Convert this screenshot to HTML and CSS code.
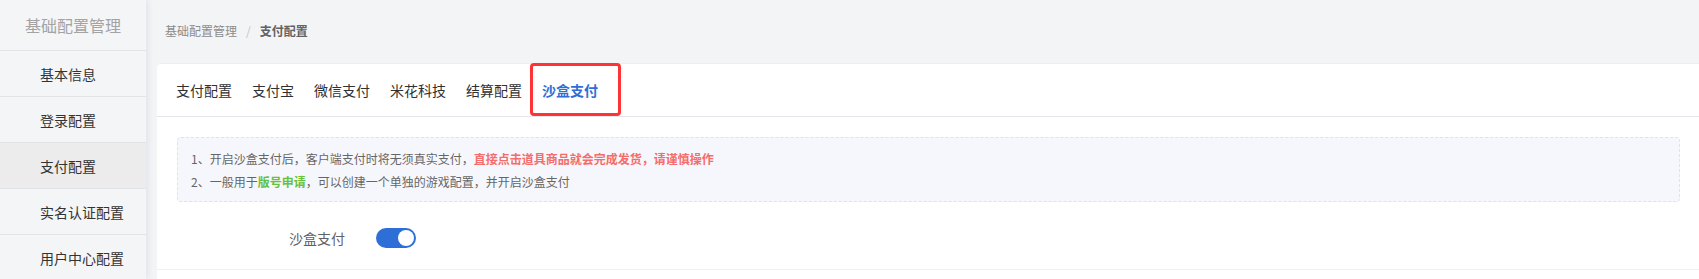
FILE: index.html
```html
<!DOCTYPE html>
<html lang="zh-CN">
<head>
<meta charset="utf-8">
<title>支付配置</title>
<link rel="stylesheet" href="styles.css">
</head>
<body>
<div class="layout">
  <aside class="sidebar">
    <div class="side-title">基础配置管理</div>
    <div class="side-item">基本信息</div>
    <div class="side-item">登录配置</div>
    <div class="side-item active">支付配置</div>
    <div class="side-item">实名认证配置</div>
    <div class="side-item">用户中心配置</div>
  </aside>
  <main class="main">
    <div class="breadcrumb">
      <span class="crumb">基础配置管理</span>
      <span class="sep">/</span>
      <span class="crumb current">支付配置</span>
    </div>
    <section class="card">
      <nav class="tabs">
        <div class="tab">支付配置</div>
        <div class="tab">支付宝</div>
        <div class="tab">微信支付</div>
        <div class="tab">米花科技</div>
        <div class="tab">结算配置</div>
        <div class="tab active">沙盒支付<span class="highlight"></span></div>
      </nav>
      <div class="card-body">
        <div class="notice">
          <p>1、开启沙盒支付后，客户端支付时将无须真实支付，<b class="red">直接点击道具商品就会完成发货，请谨慎操作</b></p>
          <p>2、一般用于<b class="green">版号申请</b>，可以创建一个单独的游戏配置，并开启沙盒支付</p>
        </div>
        <div class="form-row">
          <label class="form-label">沙盒支付</label>
          <span class="switch on"><span class="knob"></span></span>
        </div>
      </div>
    </section>
  </main>
</div>
</body>
</html>
```

FILE: styles.css
```css
* { box-sizing: border-box; }
html, body {
  margin: 0;
  padding: 0;
  width: 1699px;
  height: 279px;
  overflow: hidden;
  font-family: "Noto Sans CJK SC", "Noto Sans", sans-serif;
  background: #f3f4f6;
}
.layout {
  display: flex;
  height: 279px;
}
.sidebar {
  width: 146px;
  flex: none;
  background: #f4f5f7;
  box-shadow: 2px 0 6px rgba(0, 21, 80, 0.08);
  position: relative;
  z-index: 1;
}
.side-title {
  height: 51px;
  display: flex;
  align-items: center;
  justify-content: center;
  font-size: 16px;
  color: #a3a3a3;
  border-bottom: 1px solid #e2e3e6;
}
.side-item {
  height: 46px;
  display: flex;
  align-items: center;
  padding-left: 40px;
  font-size: 14px;
  color: #333;
  border-bottom: 1px solid #e2e3e6;
}
.side-item.active {
  background: #ececec;
}
.main {
  flex: 1;
  display: flex;
  flex-direction: column;
  padding-left: 11px;
}
.breadcrumb {
  height: 63px;
  display: flex;
  align-items: center;
  padding: 0 0 2px 8px;
  font-size: 12px;
  color: #8c8c8c;
}
.sep {
  margin: 0 9px;
  color: #c0c4cc;
}
.crumb.current {
  color: #606266;
  font-weight: 600;
}
.card {
  flex: 1;
  background: #fff;
  border-radius: 4px 0 0 0;
  border-top: 1px solid #ebeef5;
}
.tabs {
  display: flex;
  height: 53px;
  align-items: center;
  padding-left: 9px;
  border-bottom: 1px solid #e4e7ed;
}
.tab {
  padding: 0 10px;
  font-size: 14px;
  color: #303133;
  height: 100%;
  display: flex;
  align-items: center;
  position: relative;
}
.tab.active {
  color: #2d6fd6;
  font-weight: 700;
}
.highlight {
  position: absolute;
  left: -2px;
  top: -1px;
  width: 91px;
  height: 53px;
  border: 3px solid #f33;
  border-radius: 4px;
}
.card-body {
  padding: 20px 19px 0 20px;
}
.notice {
  height: 65px;
  background: #f6f7fc;
  border: 1px dashed #dde3f3;
  border-radius: 4px;
  padding: 9px 13px;
  font-size: 12px;
  color: #666;
}
.notice p {
  margin: 0;
  line-height: 23px;
}
.red { color: #f56c6c; font-weight: 700; }
.green { color: #67c23a; font-weight: 700; }
.form-row {
  display: flex;
  align-items: center;
  height: 68px;
  padding-top: 4px;
  margin: 0 -19px 0 -20px;
  border-bottom: 1px solid #eef0f6;
}
.form-label {
  width: 188px;
  text-align: right;
  font-size: 14px;
  color: #606266;
  margin-right: 31px;
}
.switch {
  width: 40px;
  height: 20px;
  border-radius: 10px;
  background: #2d6fd6;
  display: flex;
  align-items: center;
  justify-content: flex-end;
  padding: 2px;
}
.knob {
  width: 16px;
  height: 16px;
  border-radius: 50%;
  background: #fff;
}
```
